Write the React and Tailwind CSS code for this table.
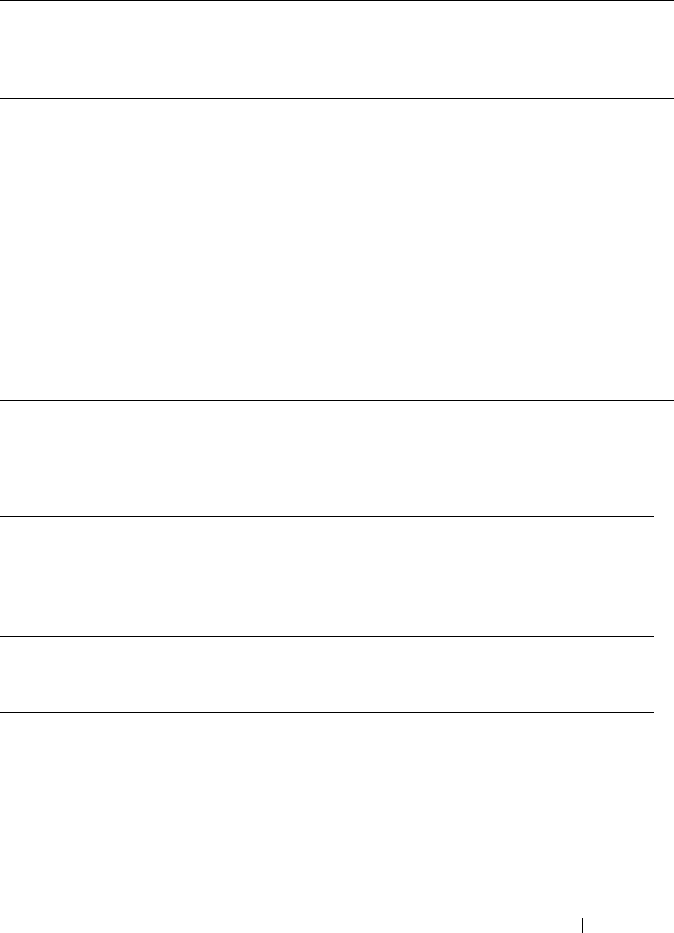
export default function App() {
  return (
    <div className="w-[674px] h-[933px] bg-white overflow-hidden">
      <div className="h-[98px] border-t border-black" />
      <div className="h-[302px] border-t border-black" />
      <div className="h-[116px] border-t border-black" />
      <div className="w-[654px] h-[120px] border-t border-black" />
      <div className="w-[654px] h-[76px] border-t border-black" />
      <div className="w-[654px] h-[206px] border-t border-black" />
      {/* page footer divider */}
      <div className="ml-[582px] w-px h-[15px] bg-black" />
    </div>
  );
}
